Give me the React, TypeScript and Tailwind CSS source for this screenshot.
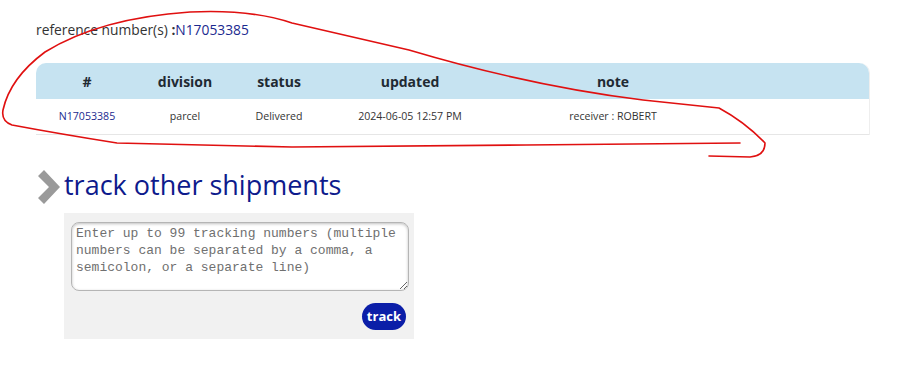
import React from 'react';

const rows = [
  { id: 'N17053385', division: 'parcel', status: 'Delivered', updated: '2024-06-05 12:57 PM', note: 'receiver : ROBERT' },
];

function Chevron() {
  return (
    <svg width="24" height="34" viewBox="0 0 24 34" className="shrink-0">
      <path d="M2 6 L8 0 L24 17 L8 34 L2 28 L13 17 Z" fill="#9a9a9a" />
    </svg>
  );
}

export default function App() {
  return (
    <div className="relative w-[916px] h-[369px] bg-white overflow-hidden" style={{ fontFamily: '"Open Sans", "Noto Sans", sans-serif' }}>
      <div className="pl-[36px] pt-[20px]">
        <div className="text-[13.8px] text-[#333] leading-[20px]">
          reference number(s) <span className="font-bold">:</span><span className="text-[#1b2a8f]">N17053385</span>
        </div>

        {/* result table */}
        <div className="mt-[23px] w-[834px] rounded-t-[10px] border-r border-[#eee]">
          <div className="flex h-[36px] items-center bg-[#c6e3f1] rounded-t-[10px] text-[14px] font-bold text-[#1f2a33]">
            <div className="w-[102px] text-center">#</div>
            <div className="w-[94px] text-center">division</div>
            <div className="w-[94px] text-center">status</div>
            <div className="w-[168px] text-center">updated</div>
            <div className="w-[238px] text-center">note</div>
          </div>
          {rows.map((r) => (
            <div key={r.id} className="flex h-[36px] items-center border-b border-[#e6e6e6] text-[10.6px] text-[#333]">
              <div className="w-[102px] text-center text-[#1b2a8f]">{r.id}</div>
              <div className="w-[94px] text-center">{r.division}</div>
              <div className="w-[94px] text-center">{r.status}</div>
              <div className="w-[168px] text-center">{r.updated}</div>
              <div className="w-[238px] text-center">{r.note}</div>
            </div>
          ))}
        </div>

        {/* track other shipments */}
        <div className="mt-[35px] flex items-center gap-[4px]">
          <Chevron />
          <h2 className="text-[27px] leading-[34px] text-[#0d1a8c] -mt-[4px]">track other shipments</h2>
        </div>
        <div className="ml-[28px] mt-[9px] w-[350px] h-[126px] bg-[#f1f1f1] px-[7px] pt-[9px]">
          <textarea
            className="block w-[338px] h-[69px] resize-y rounded-[8px] border border-[#b5b5b5] bg-white px-[4px] py-[2px] text-[13px] leading-[17px] text-[#666] placeholder-[#707070] shadow-[inset_0_1px_3px_rgba(0,0,0,0.25)] outline-none"
            style={{ fontFamily: '"Liberation Mono", "DejaVu Sans Mono", monospace' }}
            placeholder="Enter up to 99 tracking numbers (multiple numbers can be separated by a comma, a semicolon, or a separate line)"
          />
          <div className="flex justify-end mt-[12px] pr-[1px]">
            <button className="h-[27px] px-[5px] rounded-full bg-[#0b1ea8] text-white text-[13px] font-bold leading-none">track</button>
          </div>
        </div>
      </div>

      {/* red hand-drawn annotation */}
      <svg className="absolute left-0 top-0 pointer-events-none" width="916" height="369" viewBox="0 0 916 369">
        <path
          d="M740 143 L526 145 L292 147 L117 143 Q60 134 12 125 Q1 121 3 110 Q10 78 45 52 Q100 18 190 12 Q250 9 292 23 L409 50 Q530 86 643 100 L719 108 Q745 122 765 143 Q765 156 750 157 L709 156"
          fill="none"
          stroke="#e01010"
          strokeWidth="1.6"
          strokeLinecap="round"
          strokeLinejoin="round"
        />
      </svg>
    </div>
  );
}
